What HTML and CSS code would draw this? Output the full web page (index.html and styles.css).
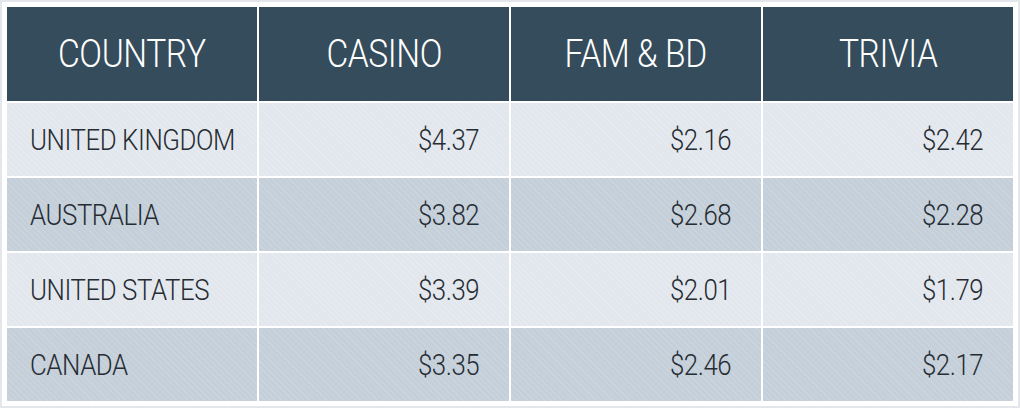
FILE: index.html
```html
<!DOCTYPE html>
<html>
<head>
<meta charset="utf-8">
<link rel="stylesheet" href="styles.css">
</head>
<body>
<div class="frame">
  <table class="rates">
    <thead>
      <tr>
        <th><span class="t">COUNTRY</span></th>
        <th><span class="t">CASINO</span></th>
        <th><span class="t">FAM &amp; BD</span></th>
        <th><span class="t">TRIVIA</span></th>
      </tr>
    </thead>
    <tbody>
      <tr class="light">
        <td class="name"><span class="t">UNITED KINGDOM</span></td>
        <td class="num"><span class="t">$4.37</span></td>
        <td class="num"><span class="t">$2.16</span></td>
        <td class="num"><span class="t">$2.42</span></td>
      </tr>
      <tr class="dark">
        <td class="name"><span class="t">AUSTRALIA</span></td>
        <td class="num"><span class="t">$3.82</span></td>
        <td class="num"><span class="t">$2.68</span></td>
        <td class="num"><span class="t">$2.28</span></td>
      </tr>
      <tr class="light">
        <td class="name"><span class="t">UNITED STATES</span></td>
        <td class="num"><span class="t">$3.39</span></td>
        <td class="num"><span class="t">$2.01</span></td>
        <td class="num"><span class="t">$1.79</span></td>
      </tr>
      <tr class="dark">
        <td class="name"><span class="t">CANADA</span></td>
        <td class="num"><span class="t">$3.35</span></td>
        <td class="num"><span class="t">$2.46</span></td>
        <td class="num"><span class="t">$2.17</span></td>
      </tr>
    </tbody>
  </table>
</div>
</body>
</html>
```

FILE: styles.css
```css
html, body {
  margin: 0;
  padding: 0;
  background: #ffffff;
}

body {
  width: 1020px;
  height: 408px;
  overflow: hidden;
  font-family: "Roboto", "Liberation Sans", sans-serif;
  font-weight: 300;
}

.frame {
  box-sizing: border-box;
  width: 1020px;
  height: 408px;
  border: 2px solid #e3e7eb;
  background: #ffffff;
  padding: 3px;
}

.rates {
  border-collapse: separate;
  border-spacing: 2px;
  table-layout: fixed;
  width: 1010px;
}

.rates th,
.rates td {
  width: 250px;
  padding: 0;
  box-sizing: border-box;
  white-space: nowrap;
}

.t {
  display: inline-block;
  letter-spacing: -0.5px;
  transform: scaleX(0.86);
}

.rates th {
  height: 94px;
  background: #344c5b;
  color: #ffffff;
  font-weight: 300;
  font-size: 39px;
  text-align: center;
  vertical-align: middle;
}

.rates th .t {
  transform-origin: center;
}

.rates td {
  height: 73px;
  color: #262c33;
  font-size: 30px;
  vertical-align: middle;
}

.rates tr.light td {
  background-color: #e2e7ed;
  background-image: repeating-linear-gradient(45deg, rgba(255,255,255,0.18) 0 1px, rgba(255,255,255,0) 1px 4px);
}

.rates tr.dark td {
  background-color: #c4cfd9;
  background-image: repeating-linear-gradient(45deg, rgba(255,255,255,0.12) 0 1px, rgba(255,255,255,0) 1px 4px);
}

.rates td.name {
  text-align: left;
  padding-left: 23px;
}

.rates td.name .t {
  transform-origin: left center;
}

.rates td.num {
  text-align: right;
  padding-right: 30px;
}

.rates td.num .t {
  transform-origin: right center;
}
```
